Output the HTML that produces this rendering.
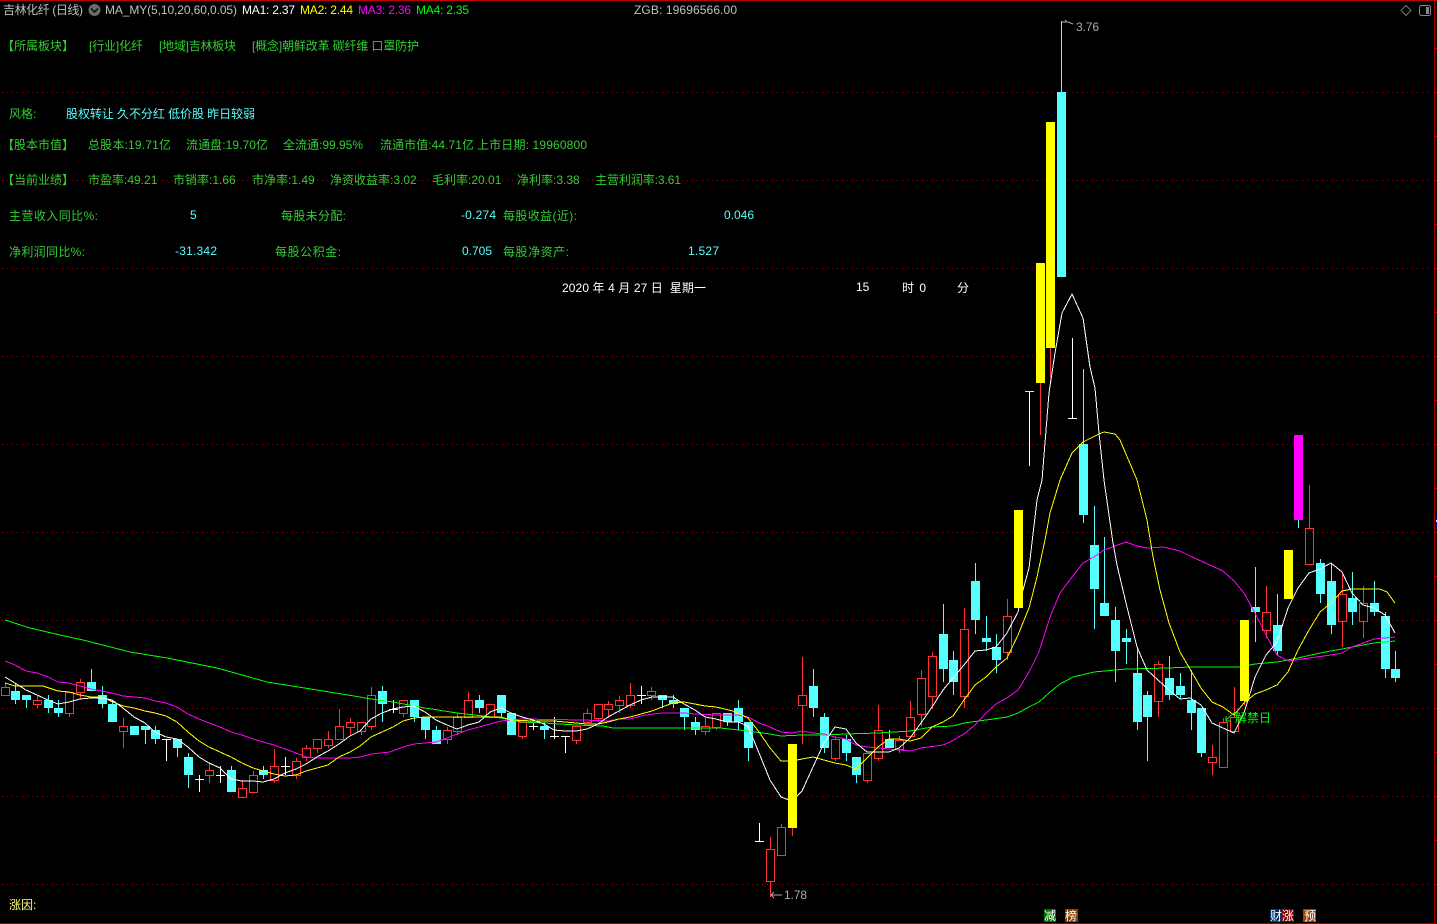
<!DOCTYPE html>
<html><head><meta charset="utf-8"><title>吉林化纤</title>
<style>
html,body{margin:0;padding:0;background:#000;width:1437px;height:924px;overflow:hidden}
svg{display:block}
text{font-family:"Liberation Sans","WenQuanYi Zen Hei","Noto Sans CJK SC",sans-serif;font-size:12px;white-space:pre}
.g{fill:#3c3}.c{fill:#5ff}.w{fill:#fff}.s{fill:#c0c0c0}
.l{fill:none;stroke-width:1;shape-rendering:crispEdges}
</style></head><body>
<svg width="1437" height="924" viewBox="0 0 1437 924" xmlns="http://www.w3.org/2000/svg">
<rect width="1437" height="924" fill="#000"/>
<!-- frame -->
<g shape-rendering="crispEdges">
<rect x="0" y="0" width="1437" height="1" fill="#c00000"/>
<rect x="0" y="923" width="1437" height="1" fill="#a80000"/>
<rect x="1434" y="0" width="1" height="924" fill="#a80000"/>
<path d="M1435 48.500h2M1435 92.500h2M1435 136.500h2M1435 180.500h2M1435 224.500h2M1435 268.500h2M1435 312.500h2M1435 356.500h2M1435 400.500h2M1435 444.500h2M1435 488.500h2M1435 532.500h2M1435 576.500h2M1435 620.500h2M1435 664.500h2M1435 708.500h2M1435 752.500h2M1435 796.500h2M1435 840.500h2M1435 884.500h2" stroke="#a80000"/>
<rect x="1435" y="515" width="2" height="14" fill="#000080"/>
<rect x="1436" y="520" width="1" height="2" fill="#fff"/>
<!-- grid -->
<path d="M2 92.500H1431M2 180.500H1431M2 268.500H1431M2 356.500H1431M2 444.500H1431M2 532.500H1431M2 620.500H1431M2 708.500H1431M2 796.500H1431M2 884.500H1431" stroke="#a00000" stroke-width="1" stroke-dasharray="1 4" fill="none"/>
<!-- cyan wicks -->
<path stroke="#5ff" stroke-width="1" fill="none" d="M15.500 683V704M26.500 695V708M48.500 695V713M58.500 700V717M91.500 669V691M102.500 686V708M112.500 700V722M145.500 726V744M155.500 726V744M177.500 739V757M188.500 753V788M231.500 766V792M263.500 766V779M382.500 686V722M414.500 700V722M425.500 717V739M436.500 726V744M479.500 695V713M501.500 695V717M544.500 722V739M662.500 695V708M673.500 695V708M684.500 708V730M695.500 717V735M727.500 713V726M738.500 700V730M748.500 722V761M813.500 669V717M824.500 713V753M846.500 735V761M856.500 757V783M889.500 730V748M943.500 604V682M953.500 651V695M975.500 563V634M986.500 616V651M996.500 634V673M1061.500 21V92M1083.500 369V523M1094.500 506V629M1104.500 537V616M1115.500 607V682M1126.500 629V664M1137.500 647V730M1147.500 691V761M1169.500 656V700M1180.500 673V699M1191.500 670V730M1201.500 708V757M1255.500 567V642M1277.500 594V655M1298.500 520V528M1320.500 559V603M1331.500 563V634M1352.500 572V625M1374.500 581V616M1385.500 612V678M1395.500 651V682"/>
<!-- cyan bodies -->
<path fill="#5ff" d="M11 691h9V700h-9zM22 695h9V700h-9zM44 700h9V708h-9zM54 708h9V713h-9zM87 682h9V691h-9zM98 695h9V704h-9zM108 704h9V722h-9zM130 726h9V735h-9zM141 726h9V730h-9zM151 730h9V739h-9zM173 739h9V748h-9zM184 757h9V775h-9zM227 770h9V792h-9zM259 770h9V775h-9zM378 691h9V704h-9zM410 700h9V717h-9zM421 717h9V730h-9zM432 730h9V744h-9zM475 700h9V708h-9zM497 695h9V713h-9zM507 713h9V735h-9zM540 726h9V730h-9zM658 695h9V700h-9zM669 700h9V704h-9zM680 708h9V717h-9zM691 722h9V730h-9zM723 713h9V722h-9zM734 708h9V722h-9zM744 722h9V748h-9zM809 686h9V708h-9zM820 717h9V748h-9zM842 739h9V753h-9zM852 757h9V775h-9zM885 739h9V748h-9zM939 634h9V669h-9zM949 660h9V682h-9zM971 581h9V620h-9zM982 638h9V642h-9zM992 647h9V660h-9zM1057 92h9V277h-9zM1079 444h9V515h-9zM1090 545h9V589h-9zM1100 603h9V616h-9zM1111 620h9V651h-9zM1122 638h9V642h-9zM1133 673h9V722h-9zM1143 695h9V717h-9zM1165 678h9V695h-9zM1176 686h9V695h-9zM1187 700h9V713h-9zM1197 708h9V753h-9zM1251 607h9V612h-9zM1273 625h9V651h-9zM1316 563h9V594h-9zM1327 581h9V625h-9zM1348 598h9V612h-9zM1370 603h9V612h-9zM1381 616h9V669h-9zM1391 669h9V678h-9z"/>
<!-- red wicks -->
<path stroke="#f33" stroke-width="1" fill="none" d="M5.500 683V687M37.500 696V700M37.500 704V708M69.500 714V717M80.500 679V682M80.500 692V699M123.500 718V726M123.500 731V748M209.500 762V770M209.500 776V783M242.500 780V788M253.500 771V775M274.500 749V766M274.500 780V783M296.500 758V761M296.500 775V779M306.500 745V748M306.500 757V761M317.500 748V753M328.500 731V739M328.500 745V748M339.500 709V726M350.500 718V722M350.500 727V735M361.500 731V735M371.500 687V695M371.500 727V730M403.500 713V717M447.500 727V730M447.500 739V744M457.500 713V717M457.500 731V735M468.500 692V700M522.500 736V739M576.500 740V744M587.500 709V713M598.500 718V722M608.500 701V704M608.500 709V718M619.500 696V700M619.500 705V713M630.500 683V695M630.500 705V708M651.500 687V691M651.500 695V700M705.500 718V726M705.500 731V735M716.500 727V730M770.500 837V849M770.500 881V897M781.500 824V827M792.500 828V836M802.500 657V695M802.500 705V744M835.500 737V739M835.500 758V761M867.500 780V783M878.500 705V730M878.500 758V761M899.500 736V740M899.500 749V753M910.500 701V717M921.500 670V678M921.500 714V726M932.500 652V656M932.500 696V709M964.500 608V629M964.500 696V708M1007.500 599V616M1007.500 652V660M1040.500 383V435M1050.500 348V378M1158.500 661V664M1158.500 701V717M1212.500 745V757M1212.500 762V775M1223.500 718V722M1234.500 687V717M1244.500 701V705M1266.500 586V612M1266.500 630V638M1309.500 485V528M1342.500 573V594M1342.500 621V647M1363.500 586V603M1363.500 621V638"/>
<!-- red hollow bodies -->
<path stroke="#f33" stroke-width="1" fill="none" d="M1.500 687.500h8V695.500h-8zM33.500 700.500h8V704.500h-8zM65.500 692.500h8V713.500h-8zM76.500 682.500h8V692.500h-8zM119.500 726.500h8V731.500h-8zM205.500 770.500h8V775.500h-8zM238.500 788.500h8V797.500h-8zM249.500 775.500h8V792.500h-8zM270.500 766.500h8V780.500h-8zM292.500 761.500h8V775.500h-8zM302.500 748.500h8V757.500h-8zM313.500 739.500h8V748.500h-8zM324.500 739.500h8V745.500h-8zM335.500 726.500h8V739.500h-8zM346.500 722.500h8V727.500h-8zM357.500 722.500h8V731.500h-8zM367.500 695.500h8V726.500h-8zM399.500 700.500h8V713.500h-8zM443.500 730.500h8V739.500h-8zM453.500 717.500h8V731.500h-8zM464.500 700.500h8V717.500h-8zM486.500 704.500h8V717.500h-8zM518.500 722.500h8V736.500h-8zM572.500 726.500h8V740.500h-8zM583.500 713.500h8V722.500h-8zM594.500 704.500h8V718.500h-8zM604.500 704.500h8V709.500h-8zM615.500 700.500h8V705.500h-8zM626.500 695.500h8V705.500h-8zM647.500 691.500h8V695.500h-8zM701.500 726.500h8V731.500h-8zM712.500 713.500h8V727.500h-8zM766.500 849.500h8V881.500h-8zM777.500 827.500h8V855.500h-8zM798.500 695.500h8V705.500h-8zM831.500 739.500h8V758.500h-8zM863.500 753.500h8V780.500h-8zM874.500 730.500h8V758.500h-8zM895.500 740.500h8V749.500h-8zM906.500 717.500h8V736.500h-8zM917.500 678.500h8V714.500h-8zM928.500 656.500h8V696.500h-8zM960.500 629.500h8V696.500h-8zM1003.500 616.500h8V652.500h-8zM1154.500 664.500h8V701.500h-8zM1208.500 757.500h8V762.500h-8zM1219.500 722.500h8V767.500h-8zM1230.500 717.500h8V731.500h-8zM1262.500 612.500h8V630.500h-8zM1305.500 528.500h8V564.500h-8zM1338.500 594.500h8V621.500h-8zM1359.500 603.500h8V621.500h-8z"/>
<!-- white crosses -->
<path stroke="#fff" stroke-width="1" fill="none" d="M162 739.500h9M166.500 739V761M195 779.500h9M199.500 775V792M216 775.500h9M220.500 766V783M281 766.500h9M285.500 757V775M389 709.500h9M393.500 700V713M529 726.500h9M533.500 722V730M550 736.500h9M554.500 717V739M561 736.500h9M565.500 736V753M637 695.500h9M641.500 686V704M755 841.500h9M759.500 823V841M1029.500 391V466M1068 418.500h9M1072.500 338V418"/>
<path stroke="#ff0" stroke-width="1" d="M1025 391.500h9"/>
</g>
<!-- MA lines -->
<polyline class="l" stroke="#0f0" points="5,620 30,628 60,635 83,640 130,652 167,658 217,668 267,682 317,690 360,697 371,699 393,702 425,708 457,713 501,718 522,722 544,723 576,725 603,726 613,728 684,728 695,728 720,728 748,731 770,734 781,736 802,735 824,735 846,734 878,733 910,731 932,727 953,726 964,723 986,720 1007,717 1018,713 1029,707 1039,702 1050,692 1060,684 1073,677 1094,672 1126,669 1169,668 1190,667 1240,667 1255,664 1277,662 1298,658 1320,653 1342,649 1363,645 1374,643 1395,641"/>
<polyline class="l" stroke="#f0f" points="5,661 15,665 26,671 37,673 48,677 58,682 69,683 80,686 91,689 102,691 112,693 123,696 134,697 145,698 155,701 166,703 177,707 188,714 199,719 209,723 220,727 231,732 242,735 253,739 263,742 274,745 285,749 296,753 306,757 317,758 333,758 350,758 360,757 371,754 390,752 403,747 414,744 425,743 436,742 447,738 457,734 468,730 479,727 490,724 501,721 511,720 522,719 583,720 608,721 619,719 630,719 641,716 652,714 662,713 684,713 695,714 716,715 738,715 748,717 759,723 770,727 781,732 792,733 802,731 813,733 824,734 835,737 846,739 856,745 867,747 889,749 910,751 921,748 943,745 950,742 964,734 975,725 986,713 996,704 1007,698 1018,690 1029,672 1039,652 1050,617 1060,593 1072,577 1083,563 1094,557 1104,550 1115,546 1126,542 1137,546 1147,548 1163,547 1180,551 1190,556 1201,561 1212,566 1223,571 1234,581 1244,593 1255,613 1266,635 1277,655 1288,661 1309,658 1331,655 1342,653 1352,647 1363,643 1374,639 1395,637"/>
<polyline class="l" stroke="#ff0" points="5,683 15,686 43,686 58,691 69,692 80,695 91,697 102,697 113,702 123,706 134,708 145,711 155,713 166,716 177,722 188,732 199,741 209,747 220,752 231,757 242,763 253,768 263,771 274,774 285,776 296,775 306,771 317,768 328,765 339,757 350,752 360,746 371,737 382,732 393,727 403,721 414,718 425,717 436,717 457,717 468,717 490,717 501,717 511,720 533,721 554,721 565,722 576,723 587,724 598,724 608,722 619,719 630,717 641,714 652,711 662,707 673,703 684,702 695,704 705,706 716,707 733,711 748,718 759,732 770,748 781,761 792,761 802,759 813,757 824,760 835,763 846,765 856,769 867,758 878,747 889,739 899,739 910,741 921,738 932,727 943,722 953,716 964,700 975,685 986,677 996,667 1007,658 1018,635 1029,608 1037,577 1045,540 1050,513 1060,480 1072,453 1083,442 1099,434 1104,432 1115,434 1120,440 1137,480 1147,520 1153,557 1160,590 1169,623 1180,652 1190,669 1201,688 1212,702 1223,707 1234,715 1244,703 1255,694 1266,690 1277,685 1288,672 1298,650 1309,630 1320,612 1331,603 1342,591 1352,589 1380,589 1387,592 1395,603"/>
<polyline class="l" stroke="#fff" points="5,677 15,683 26,690 37,695 48,700 58,704 69,702 80,699 91,698 102,698 112,700 123,708 134,717 145,723 155,732 166,737 177,739 188,747 199,757 209,763 220,768 231,779 242,781 253,781 263,782 274,779 285,773 296,769 306,764 317,757 328,751 339,744 350,736 360,731 371,719 382,713 393,709 403,707 414,706 425,712 436,720 447,725 457,729 468,725 479,722 490,712 501,708 511,713 522,717 533,720 544,724 554,730 565,731 576,731 587,729 598,724 608,717 619,711 630,705 641,700 652,697 673,697 684,704 695,710 705,717 716,719 727,722 738,722 748,726 759,753 770,780 781,797 792,801 802,791 813,767 824,743 835,727 846,729 856,743 867,752 889,752 899,748 910,738 921,723 932,707 943,690 953,678 964,665 975,651 986,650 996,647 1007,633 1018,612 1023,590 1029,568 1037,500 1042,480 1049,393 1055,353 1062,313 1072,294 1083,318 1090,367 1095,388 1099,433 1104,480 1113,543 1117,565 1126,603 1137,647 1147,670 1158,680 1169,690 1180,699 1190,698 1201,705 1212,723 1223,728 1234,733 1244,713 1255,677 1266,655 1277,642 1288,608 1298,588 1309,573 1320,569 1331,563 1342,572 1352,593 1363,605 1374,608 1385,615 1395,633"/>
<!-- solid bars over lines -->
<g shape-rendering="crispEdges">
<rect x="788" y="744" width="9" height="84" fill="#ff0"/>
<rect x="1014" y="510" width="9" height="98" fill="#ff0"/>
<rect x="1036" y="263" width="9" height="120" fill="#ff0"/>
<rect x="1046" y="122" width="9" height="226" fill="#ff0"/>
<rect x="1240" y="620" width="9" height="81" fill="#ff0"/>
<rect x="1284" y="550" width="9" height="49" fill="#ff0"/>
<rect x="1294" y="435" width="9" height="85" fill="#f0f"/>
</g>
<!-- labels on chart -->
<path d="M1062 22h5l-2-2M1068 22l5 2" stroke="#aaa" fill="none"/>
<text x="1076" y="31" style="fill:#aaa" textLength="23">3.76</text>
<path d="M771 895h11M771 895l3-3M771 895l3 3" stroke="#aaa" fill="none"/>
<text x="784" y="899" style="fill:#aaa" textLength="23">1.78</text>
<path d="M1235 712L1226 720M1226 716v5h5" stroke="#0f0" fill="none"/>
<text x="1235" y="722" fill="#0f0">解禁日</text>
<!-- header -->
<text x="3" y="14" class="s" textLength="80">吉林化纤 (日线)</text>
<circle cx="94.500" cy="10" r="6" fill="#6a6a6a"/>
<path d="M91 8.500l3.500 3.500 3.500-3.500" stroke="#111" stroke-width="1.600" fill="none"/>
<text x="105" y="14" class="s" textLength="132">MA_MY(5,10,20,60,0.05)</text>
<text x="242" y="14" fill="#fff" textLength="53">MA1: 2.37</text>
<text x="300" y="14" fill="#ff0" textLength="53">MA2: 2.44</text>
<text x="358" y="14" fill="#f0f" textLength="53">MA3: 2.36</text>
<text x="416" y="14" fill="#0f0" textLength="53">MA4: 2.35</text>
<text x="634" y="14" class="s" textLength="103">ZGB: 19696566.00</text>
<path d="M1406 5.500l5 5-5 5-5-5z" stroke="#777" fill="none"/>
<rect x="1419.500" y="5.500" width="11" height="10" rx="2" stroke="#888" fill="none"/>
<rect x="1426" y="7" width="3" height="7" fill="#888"/>
<!-- info rows -->
<text x="2" y="50" class="g">【所属板块】</text>
<text x="89" y="50" class="g" textLength="54">[行业]化纤</text>
<text x="159" y="50" class="g" textLength="77">[地域]吉林板块</text>
<text x="252" y="50" class="g" textLength="167">[概念]朝鲜改革 碳纤维 口罩防护</text>
<text x="9" y="118" class="g">风格:</text>
<text x="66" y="118" class="c" textLength="189">股权转让 久不分红 低价股 昨日较弱</text>
<text x="2" y="149" class="g">【股本市值】</text>
<text x="88" y="149" class="g" textLength="83">总股本:19.71亿</text>
<text x="186" y="149" class="g" textLength="82">流通盘:19.70亿</text>
<text x="283" y="149" class="g" textLength="80">全流通:99.95%</text>
<text x="380" y="149" class="g" textLength="94">流通市值:44.71亿</text>
<text x="477" y="149" class="g" textLength="110">上市日期: 19960800</text>
<text x="2" y="184" class="g">【当前业绩】</text>
<text x="88" y="184" class="g">市盈率:49.21</text>
<text x="173" y="184" class="g">市销率:1.66</text>
<text x="252" y="184" class="g">市净率:1.49</text>
<text x="330" y="184" class="g">净资收益率:3.02</text>
<text x="432" y="184" class="g">毛利率:20.01</text>
<text x="517" y="184" class="g">净利率:3.38</text>
<text x="595" y="184" class="g" textLength="86">主营利润率:3.61</text>
<text x="9" y="220" class="g" textLength="89">主营收入同比%:</text>
<text x="190" y="219" class="c">5</text>
<text x="281" y="220" class="g" textLength="65">每股未分配:</text>
<text x="461" y="219" class="c" textLength="35">-0.274</text>
<text x="503" y="220" class="g" textLength="74">每股收益(近):</text>
<text x="724" y="219" class="c">0.046</text>
<text x="9" y="256" class="g" textLength="76">净利润同比%:</text>
<text x="175" y="255" class="c" textLength="42">-31.342</text>
<text x="275" y="256" class="g" textLength="66">每股公积金:</text>
<text x="462" y="255" class="c">0.705</text>
<text x="503" y="256" class="g" textLength="66">每股净资产:</text>
<text x="688" y="255" class="c" textLength="31">1.527</text>
<text x="562" y="292" class="w" textLength="144">2020 年 4 月 27 日  星期一</text>
<text x="856" y="291" class="w">15</text>
<text x="902" y="292" class="w" textLength="24">时 0</text>
<text x="957" y="292" class="w">分</text>
<!-- footer -->
<text x="9" y="909" fill="#ffff78">涨因:</text>
<g shape-rendering="crispEdges">
<rect x="1044" y="909" width="12" height="13" fill="#007000"/>
<rect x="1065" y="909" width="13" height="13" fill="#804000"/>
<rect x="1270" y="909" width="12" height="13" fill="#003070"/>
<rect x="1282" y="909" width="12" height="13" fill="#800000"/>
<rect x="1303" y="909" width="13" height="13" fill="#a04000"/>
</g>
<text x="1044" y="920" fill="#fff">减</text>
<text x="1065" y="920" fill="#fff">榜</text>
<text x="1270" y="920" fill="#fff">财</text>
<text x="1282" y="920" fill="#fff">涨</text>
<text x="1304" y="920" fill="#fff">预</text>
</svg>
</body></html>
